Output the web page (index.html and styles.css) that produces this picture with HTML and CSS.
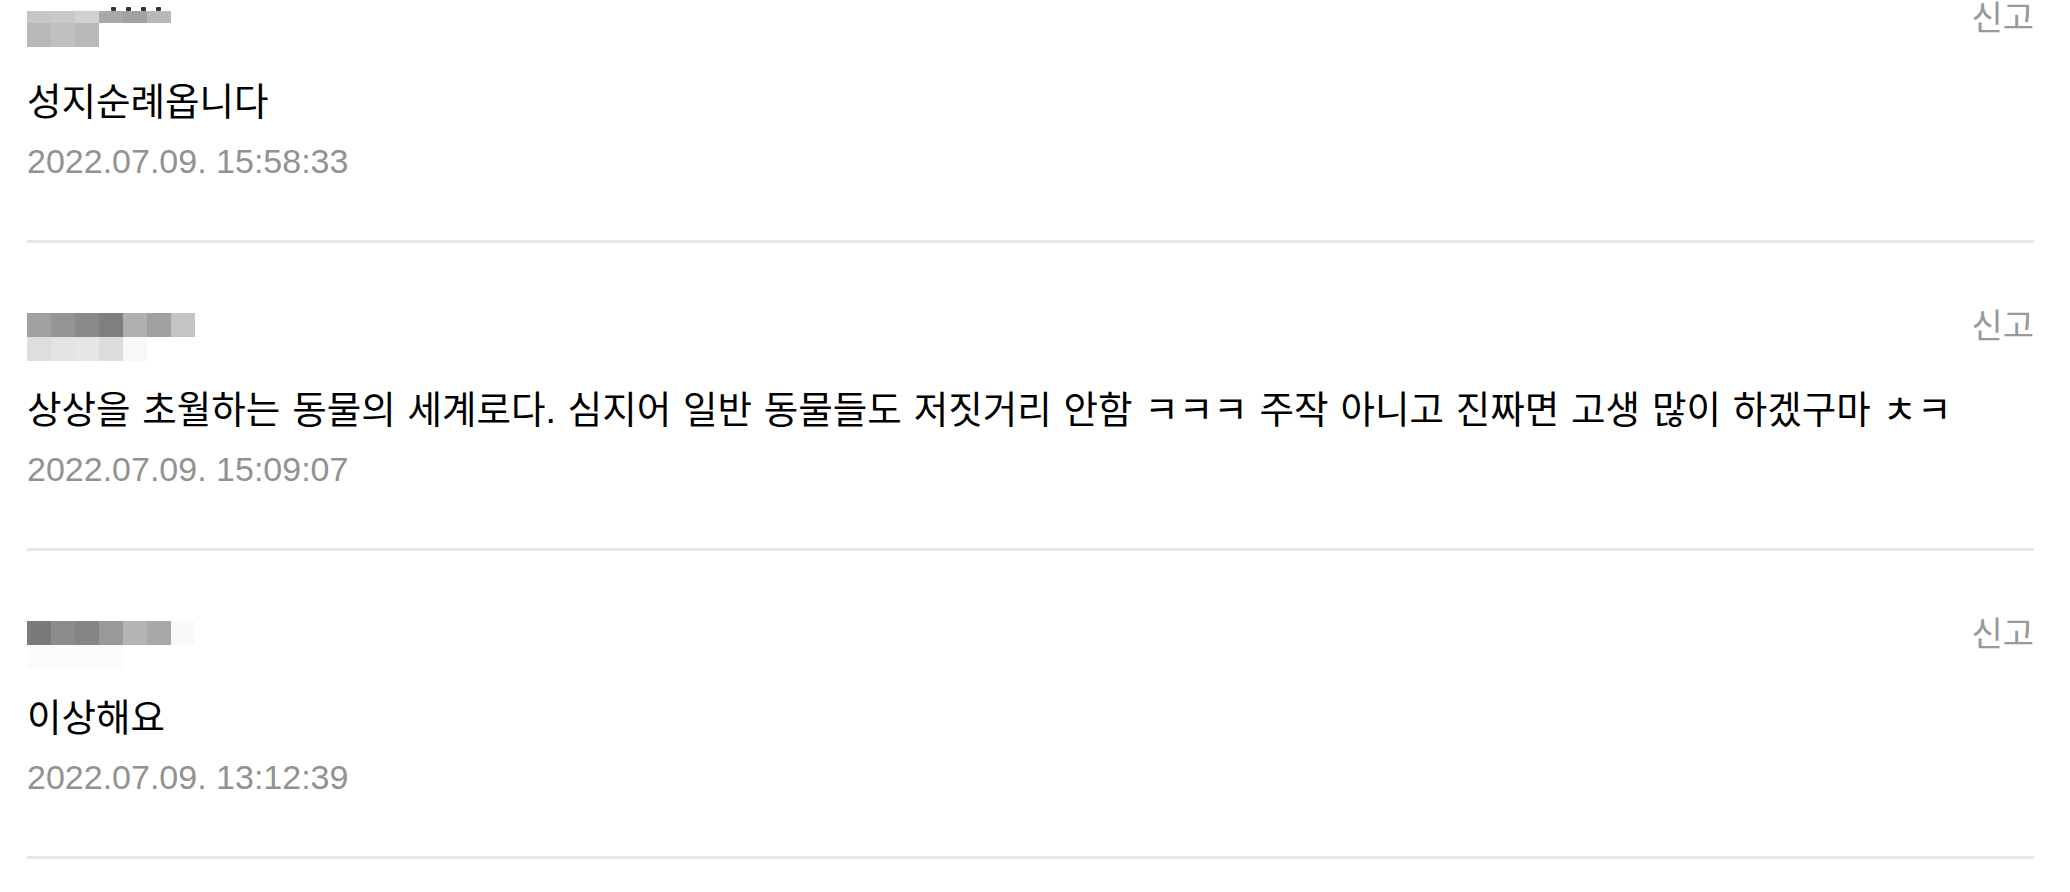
FILE: index.html
```html
<!DOCTYPE html>
<html lang="ko">
<head>
<meta charset="utf-8">
<title>댓글</title>
<link rel="stylesheet" href="styles.css">
</head>
<body>
<ul class="comments">
  <li class="comment comment--first">
    <div class="comment-head">
      <div class="mosaic mosaic--cut">
        <div class="mosaic-dots"><span></span><span></span><span></span><span></span></div>
        <div class="mosaic-row mosaic-row--half">
          <i class="c1"></i><i class="c2"></i><i class="c3"></i><i class="c4"></i><i class="c5"></i><i class="c6"></i>
        </div>
        <div class="mosaic-row">
          <i class="c7"></i><i class="c8"></i><i class="c9"></i>
        </div>
      </div>
      <button class="report">신고</button>
    </div>
    <p class="comment-text">성지순례옵니다</p>
    <p class="comment-date">2022.07.09. 15:58:33</p>
  </li>
  <li class="comment">
    <div class="comment-head">
      <div class="mosaic">
        <div class="mosaic-row">
          <i class="d1"></i><i class="d2"></i><i class="d3"></i><i class="d4"></i><i class="d5"></i><i class="d6"></i><i class="d7"></i>
        </div>
        <div class="mosaic-row">
          <i class="d8"></i><i class="d9"></i><i class="d10"></i><i class="d11"></i><i class="d12"></i>
        </div>
      </div>
      <button class="report">신고</button>
    </div>
    <p class="comment-text">상상을 초월하는 동물의 세계로다. 심지어 일반 동물들도 저짓거리 안함 ㅋㅋㅋ 주작 아니고 진짜면 고생 많이 하겠구마 ㅊㅋ</p>
    <p class="comment-date">2022.07.09. 15:09:07</p>
  </li>
  <li class="comment">
    <div class="comment-head">
      <div class="mosaic">
        <div class="mosaic-row">
          <i class="e1"></i><i class="e2"></i><i class="e3"></i><i class="e4"></i><i class="e5"></i><i class="e6"></i><i class="e7"></i>
        </div>
        <div class="mosaic-row">
          <i class="e8"></i><i class="e8"></i><i class="e8"></i><i class="e8"></i>
        </div>
      </div>
      <button class="report">신고</button>
    </div>
    <p class="comment-text">이상해요</p>
    <p class="comment-date">2022.07.09. 13:12:39</p>
  </li>
</ul>
</body>
</html>
```

FILE: styles.css
```css
html, body {
  margin: 0;
  padding: 0;
  background: #ffffff;
}

body {
  font-family: "Liberation Sans", "Noto Sans CJK KR", sans-serif;
  color: #000;
  overflow: hidden;
}

.comments {
  list-style: none;
  margin: 0 0 0 27px;
  padding: 0;
  width: 2007px;
}

.comment {
  padding: 70px 0 55px;
  border-bottom: 3px solid #e6e6e6;
}

.comment--first {
  margin-top: -65px;
}

.comment-head {
  display: flex;
  justify-content: space-between;
  align-items: flex-start;
  height: 48px;
}

.mosaic {
  display: flex;
  flex-direction: column;
}

.mosaic--cut {
  padding-top: 3px;
}

.mosaic-dots {
  display: flex;
  gap: 10px;
  height: 4px;
  padding-left: 84px;
  margin-top: -1px;
}

.mosaic-dots span {
  width: 5px;
  height: 4px;
  background: #333;
  border-radius: 1px;
}

.mosaic-row {
  display: flex;
  height: 24px;
}

.mosaic-row--half {
  height: 12px;
}

.mosaic-row i {
  display: block;
  width: 24px;
  height: 100%;
}

.c1 { background: #c6c6c6; }
.c2 { background: #c8c8c8; }
.c3 { background: #d0d0d0; }
.c4 { background: #a9a9a9; }
.c5 { background: #a2a2a2; }
.c6 { background: #b8b8b8; }
.c7 { background: #b8b8b8; }
.c8 { background: #c0c0c0; }
.c9 { background: #b9b9b9; }

.d1 { background: #a0a0a0; }
.d2 { background: #959595; }
.d3 { background: #8a8a8a; }
.d4 { background: #7f7f7f; }
.d5 { background: #b0b0b0; }
.d6 { background: #a0a0a0; }
.d7 { background: #c4c4c4; }
.d8 { background: #dedede; }
.d9 { background: #e4e4e4; }
.d10 { background: #e6e6e6; }
.d11 { background: #dcdcdc; }
.d12 { background: #f8f8f8; }

.e1 { background: #7a7a7a; }
.e2 { background: #8c8c8c; }
.e3 { background: #858585; }
.e4 { background: #999999; }
.e5 { background: #b5b5b5; }
.e6 { background: #a8a8a8; }
.e7 { background: #fafafa; }
.e8 { background: #fbfbfb; }

.report {
  border: 0;
  background: none;
  padding: 0;
  margin: -6px 0 0;
  font-family: "Noto Sans CJK KR", sans-serif;
  font-size: 34px;
  line-height: 34px;
  color: #999;
}

.comment-text {
  margin: 25px 0 0;
  font-size: 37.5px;
  line-height: 48px;
  word-spacing: 1.4px;
  color: #000;
  white-space: nowrap;
}

.comment-date {
  margin: 11px 0 0;
  font-size: 34px;
  line-height: 48px;
  color: #929292;
}
```
